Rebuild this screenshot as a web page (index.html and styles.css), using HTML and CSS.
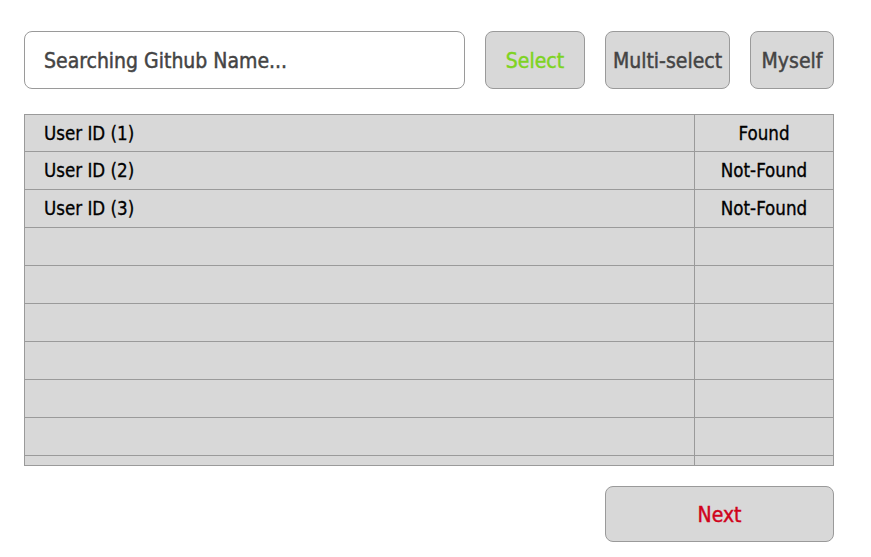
FILE: index.html
```html
<!DOCTYPE html>
<html>
<head>
<meta charset="utf-8">
<link rel="stylesheet" href="styles.css">
</head>
<body>
<div class="page">
  <div class="toolbar">
    <div class="search">Searching Github Name...</div>
    <button class="btn btn-select">Select</button>
    <button class="btn btn-multi">Multi-select</button>
    <button class="btn btn-myself">Myself</button>
  </div>
  <div class="table">
    <div class="row first"><div class="cell name">User ID (1)</div><div class="cell status">Found</div></div>
    <div class="row"><div class="cell name">User ID (2)</div><div class="cell status">Not-Found</div></div>
    <div class="row"><div class="cell name">User ID (3)</div><div class="cell status">Not-Found</div></div>
    <div class="row"><div class="cell name"></div><div class="cell status"></div></div>
    <div class="row"><div class="cell name"></div><div class="cell status"></div></div>
    <div class="row"><div class="cell name"></div><div class="cell status"></div></div>
    <div class="row"><div class="cell name"></div><div class="cell status"></div></div>
    <div class="row"><div class="cell name"></div><div class="cell status"></div></div>
    <div class="row"><div class="cell name"></div><div class="cell status"></div></div>
    <div class="row"><div class="cell name"></div><div class="cell status"></div></div>
  </div>
  <div class="footer">
    <button class="btn btn-next">Next</button>
  </div>
</div>
</body>
</html>
```
FILE: styles.css
```css
html, body {
  margin: 0;
  padding: 0;
  background: #ffffff;
}
.page {
  padding: 31px 0 0 24px;
  width: 810px;
  font-family: "DejaVu Sans Condensed", "DejaVu Sans", sans-serif;
}
.toolbar {
  display: flex;
  gap: 20px;
  height: 58px;
}
.search {
  box-sizing: border-box;
  width: 441px;
  height: 58px;
  border: 1px solid #9a9a9a;
  border-radius: 8px;
  padding: 2px 0 0 19px;
  display: flex;
  align-items: center;
  font-size: 21px;
  color: #444444;
  -webkit-text-stroke: 0.45px #444444;
}
.btn {
  box-sizing: border-box;
  height: 58px;
  border: 1px solid #9a9a9a;
  border-radius: 8px;
  background: #d8d8d8;
  font-family: inherit;
  font-size: 21px;
  color: #444444;
  -webkit-text-stroke: 0.45px currentColor;
  padding: 2px 0 0 0;
  margin: 0;
}
.btn-select { width: 100px; color: #7ed321; }
.btn-multi { width: 125px; }
.btn-myself { width: 84px; }
.table {
  box-sizing: border-box;
  margin-top: 25px;
  width: 810px;
  height: 352px;
  border: 1px solid #9a9a9a;
  background: #d8d8d8;
  overflow: hidden;
}
.row {
  display: flex;
  height: 37px;
  border-bottom: 1px solid #9a9a9a;
}
.row.first { height: 36px; }
.cell {
  display: flex;
  align-items: center;
  font-size: 18.6px;
  color: #000000;
  -webkit-text-stroke: 0.3px #000000;
}
.name {
  flex: 1;
  padding-left: 19px;
  border-right: 1px solid #9a9a9a;
}
.status {
  width: 138px;
  justify-content: center;
}
.footer {
  display: flex;
  justify-content: flex-end;
  margin-top: 20px;
}
.btn-next {
  width: 229px;
  height: 56px;
  color: #d0021b;
}
```
